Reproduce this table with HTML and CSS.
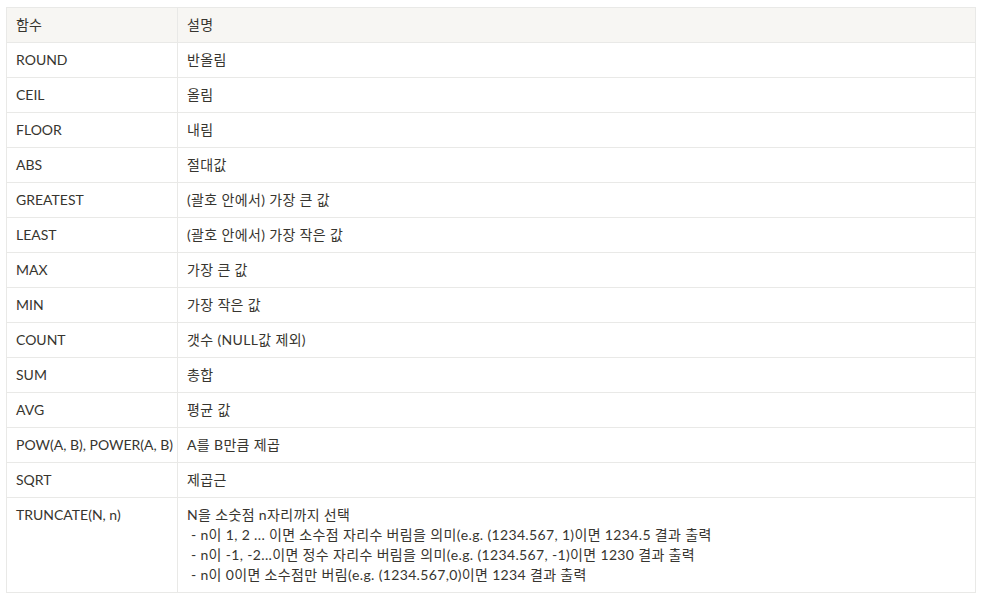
FILE: index.html
```html
<!DOCTYPE html>
<html lang="ko">
<head>
<meta charset="utf-8">
<link rel="stylesheet" href="styles.css">
</head>
<body>
<div class="wrap">
<table class="fn-table">
  <colgroup><col class="c1"><col class="c2"></colgroup>
  <thead>
    <tr><th>함수</th><th class="desc">설명</th></tr>
  </thead>
  <tbody>
    <tr><td>ROUND</td><td class="desc">반올림</td></tr>
    <tr><td>CEIL</td><td class="desc">올림</td></tr>
    <tr><td>FLOOR</td><td class="desc">내림</td></tr>
    <tr><td>ABS</td><td class="desc">절대값</td></tr>
    <tr><td>GREATEST</td><td class="desc">(괄호 안에서) 가장 큰 값</td></tr>
    <tr><td>LEAST</td><td class="desc">(괄호 안에서) 가장 작은 값</td></tr>
    <tr><td>MAX</td><td class="desc">가장 큰 값</td></tr>
    <tr><td>MIN</td><td class="desc">가장 작은 값</td></tr>
    <tr><td>COUNT</td><td class="desc">갯수 (NULL값 제외)</td></tr>
    <tr><td>SUM</td><td class="desc">총합</td></tr>
    <tr><td>AVG</td><td class="desc">평균 값</td></tr>
    <tr><td>POW(A, B), POWER(A, B)</td><td class="desc">A를 B만큼 제곱</td></tr>
    <tr><td>SQRT</td><td class="desc">제곱근</td></tr>
    <tr><td>TRUNCATE(N, n)</td><td class="desc">N을 소숫점 n자리까지 선택<br> - n이 1, 2 ... 이면 소수점 자리수 버림을 의미(e.g. (1234.567, 1)이면 1234.5 결과 출력<br> - n이 -1, -2...이면 정수 자리수 버림을 의미(e.g. (1234.567, -1)이면 1230 결과 출력<br> - n이 0이면 소수점만 버림(e.g. (1234.567,0)이면 1234 결과 출력</td></tr>
  </tbody>
</table>
</div>
</body>
</html>
```
FILE: styles.css
```css
html, body {
  margin: 0;
  padding: 0;
  background: #ffffff;
}
.wrap {
  padding: 7px 6px;
}
.fn-table {
  border-collapse: collapse;
  width: 970px;
  table-layout: fixed;
  font-family: Lato, "Noto Sans CJK KR", sans-serif;
  font-size: 14px;
  line-height: 20px;
  color: #37352f;
}
.c1 { width: 171px; }
.fn-table th,
.fn-table td {
  border: 1px solid #e9e9e7;
  padding: 7px 9px;
  text-align: left;
  vertical-align: top;
  font-weight: 400;
  white-space: pre-wrap;
}
.fn-table td:first-child {
  white-space: nowrap;
}
.fn-table .desc {
  letter-spacing: 0.35px;
}
.fn-table th {
  background: #f7f6f3;
}
```
